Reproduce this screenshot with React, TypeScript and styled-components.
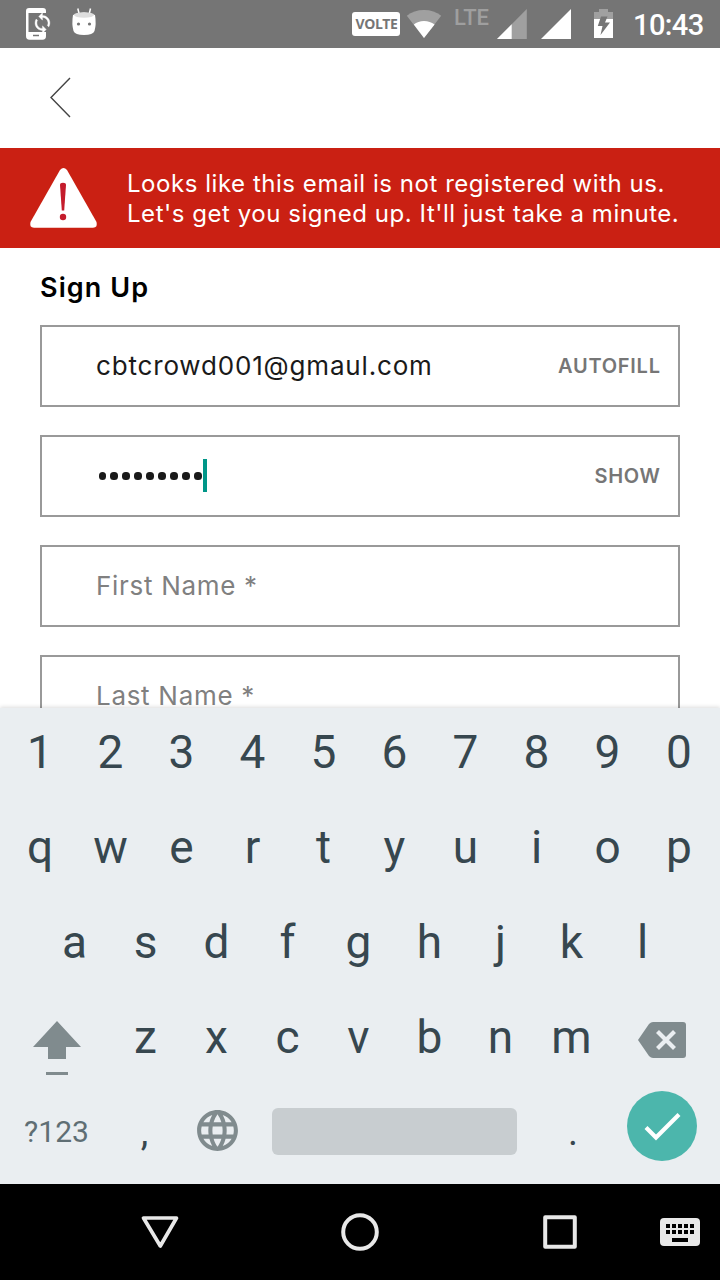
import React from "react";
import styled, { createGlobalStyle } from "styled-components";
import { MdLanguage } from "react-icons/md";

const Global = createGlobalStyle`
  * { box-sizing: border-box; }
  body { margin: 0; background: #fff; }
`;

const Screen = styled.div`
  width: 720px;
  height: 1280px;
  display: flex;
  flex-direction: column;
  overflow: hidden;
  background: #fff;
  font-family: Inter, "Open Sans", sans-serif;
`;

const StatusBar = styled.header`
  height: 48px;
  flex: none;
  display: flex;
  background: #757575;
  color: #fff;
  font-family: Roboto, sans-serif;
`;

const Notifications = styled.div`
  display: flex;
  flex: 1;
`;

const VolteBadge = styled.span`
  width: 48px;
  height: 24px;
  margin-top: 12px;
  border-radius: 3px;
  background: #fff;
  color: #757575;
  font: 700 14px/24px "Open Sans", sans-serif;
  letter-spacing: -0.45px;
  padding-left: 1px;
  text-align: center;
`;

const Lte = styled.span`
  width: 54px;
  padding-left: 11px;
  font: 500 22px/36px Roboto, sans-serif;
  letter-spacing: 0;
  color: #9f9f9f;
`;

const Clock = styled.time`
  width: 87px;
  margin-left: 3px;
  font: 500 29px/51px Roboto, sans-serif;
  letter-spacing: -0.6px;
`;

const TopBar = styled.nav`
  height: 100px;
  flex: none;
`;

const Banner = styled.section`
  height: 100px;
  flex: none;
  display: flex;
  background: #ca2013;
  color: #fff;
`;

const BannerText = styled.p`
  margin: 21px 0 0 26px;
  font-size: 24px;
  line-height: 30px;
  letter-spacing: 0.54px;
  white-space: nowrap;
`;

const Line = styled.span`
  display: block;
`;

const Form = styled.main`
  height: 460px;
  flex: none;
  padding: 0 40px;
  overflow: hidden;
`;

const Title = styled.h1`
  margin: 0;
  height: 77px;
  font-size: 27px;
  font-weight: 600;
  line-height: 79px;
  letter-spacing: 1.1px;
  color: #000;
`;

const Field = styled.div`
  height: 82px;
  margin-bottom: 28px;
  padding: 0 18px 0 54px;
  border: 2px solid #999;
  display: flex;
  align-items: center;
  justify-content: space-between;
`;

const Value = styled.span<{ $hint?: boolean }>`
  font-size: 26px;
  line-height: 32px;
  letter-spacing: ${(p) => (p.$hint ? 0.7 : 0.83)}px;
  color: ${(p) => (p.$hint ? "#808080" : "#1a1a1a")};
`;

const Action = styled.span`
  font-size: 20px;
  font-weight: 600;
  letter-spacing: 0.75px;
  margin-right: -0.75px;
  color: #767676;
`;

const Password = styled.div`
  display: flex;
  align-items: center;
  padding-left: 2.5px;
`;

const Dot = styled.i`
  width: 7.2px;
  height: 7.2px;
  margin-right: 4.8px;
  border-radius: 50%;
  background: #1a1a1a;
  &:last-of-type { margin-right: 1.3px; }
`;

const Caret = styled.b`
  width: 4px;
  height: 33px;
  margin-top: -1px;
  background: #009688;
`;

const Keyboard = styled.section`
  position: relative;
  height: 476px;
  flex: none;
  background: #eaeef1;
  box-shadow: 0 -1px 4px rgba(0, 0, 0, 0.14);
  font-family: Roboto, sans-serif;
  color: #37474f;
`;

const Key = styled.span<{ $w?: number; $size?: number; $line?: number; $muted?: boolean }>`
  width: ${(p) => p.$w ?? 71}px;
  flex: none;
  display: flex;
  justify-content: center;
  font-size: ${(p) => p.$size ?? 46}px;
  line-height: ${(p) => p.$line ?? 89}px;
  color: ${(p) => (p.$muted ? "#5f6e74" : "#37474f")};
`;

const KeyRow = styled.div<{ $inset?: number; $full?: boolean }>`
  height: 95px;
  display: flex;
  padding: 0 ${(p) => p.$inset ?? 5}px;
  ${(p) => p.$full && `
    & > :first-child { width: 70px; }
    & > :last-child { width: 72px; }
  `}
`;

const GlobeKey = styled(Key)`
  color: #808b8e;
  padding: 18px 0 0 1px;
`;

const SpaceBar = styled.div`
  width: 245px;
  height: 47px;
  margin: 20px 0 0 20px;
  border-radius: 6px;
  background: #c8cdd0;
`;

const Enter = styled.div`
  width: 70px;
  height: 70px;
  margin: 3px 0 0 -2px;
  border-radius: 50%;
  background: #4cb6ac;
`;

const NavBar = styled.footer`
  height: 96px;
  flex: none;
  background: #000;
`;

const Svg = styled.svg`
  display: block;
  flex: none;
`;

const SyncPhone = () => (
  <Svg width="60" height="48">
    <path
      fill="#fff"
      fillRule="evenodd"
      d="M29 8H43Q46 8 46 11V13H28.500V32H46V36Q46 39.800 42.500 39.800H29.500Q26 39.800 26 36V11Q26 8 29 8ZM33 34.800V36.200H39V34.800Z"
    />
    <circle cx="42.500" cy="23" r="8.200" fill="#757575" />
    <path
      transform="translate(31.300 11.800) scale(.93)"
      fill="#fff"
      stroke="#fff"
      strokeWidth=".4"
      d="M12 4V1L8 5l4 4V6c3.310 0 6 2.690 6 6 0 1.010-.25 1.970-.7 2.800l1.460 1.460C19.540 15.030 20 13.570 20 12c0-4.420-3.580-8-8-8zm0 14c-3.310 0-6-2.690-6-6 0-1.010.25-1.970.7-2.800L5.240 7.740C4.460 8.970 4 10.430 4 12c0 4.420 3.580 8 8 8v3l4-4-4-4v3z"
    />
  </Svg>
);

const RobotHead = () => (
  <Svg width="50" height="48">
    <path d="M17.800 8.500L19.200 14M30.500 8.500L29.200 14" stroke="#fff" strokeWidth="1.500" fill="none" />
    <path d="M13 15Q24 10 35 15Q36.500 24 34.500 31Q33 35 24 35Q15 35 13.500 31Q11.500 24 13 15Z" fill="#fff" />
    <ellipse cx="24" cy="15" rx="10" ry="2.700" fill="#dedede" />
    <circle cx="18.500" cy="24" r="1.600" fill="#757575" />
    <circle cx="29.500" cy="24" r="1.600" fill="#757575" />
  </Svg>
);

const Wifi = () => (
  <Svg width="43" height="48">
    <path d="M24 38L6.800 15.800Q14 10 24 10T41.200 15.800Z" fill="#a0a0a0" />
    <path d="M24 38L13.800 24.500Q18 21 24 21T34.600 24.500Z" fill="#fff" />
  </Svg>
);

const Signals = () => (
  <Svg width="97" height="48">
    <path d="M29.800 9V39H0Z" fill="#a0a0a0" />
    <path d="M14.700 24.300V39H0Z" fill="#fff" />
    <path d="M74 9V39H44Z" fill="#fff" />
  </Svg>
);

const ChargingBattery = () => (
  <Svg width="36" height="48">
    <path d="M0 12H5V9H14V12H19V19H0Z" fill="#a0a0a0" />
    <path d="M0 19H19V38H0Z" fill="#fff" />
    <path d="M7 16.500H13.500L11 22.500H16L6.500 35L8.500 26H3.800Z" fill="#757575" />
  </Svg>
);

const Chevron = () => (
  <Svg width="120" height="100">
    <path d="M70 30L51 49.500L70 69" fill="none" stroke="#444" strokeWidth="1.400" />
  </Svg>
);

const Warning = () => (
  <Svg width="101" height="100">
    <path d="M60 22Q63.500 18 67 22L96.500 74Q98 79.700 93 79.700H34Q29 79.700 30.500 74Z" fill="#fff" />
    <path d="M60 37Q60 34.800 63 34.800T66 37L64.200 62.500H61.800Z" fill="#c41c2c" />
    <circle cx="63" cy="69" r="3.200" fill="#c41c2c" />
  </Svg>
);

const ShiftIcon = () => (
  <Svg width="105" height="95">
    <path d="M52 28L76 54H61V66H43V54H28Z" fill="#808b8e" />
    <path d="M41 79H63V82H41Z" fill="#808b8e" />
  </Svg>
);

const BackspaceIcon = () => (
  <Svg width="108" height="95">
    <path d="M31 47L42 31Q44 29 46 29H76Q79 29 79 32V62Q79 65 76 65H46Q44 65 42 63Z" fill="#808b8e" />
    <path d="M50.500 38.500L67.500 55.500M67.500 38.500L50.500 55.500" stroke="#eaeef1" strokeWidth="4.200" />
  </Svg>
);

const CheckIcon = () => (
  <Svg width="70" height="70">
    <path d="M19 36.500L29 46.500L52 23.500" fill="none" stroke="#fff" strokeWidth="4.200" />
  </Svg>
);

const NavIcons = () => (
  <Svg width="720" height="96">
    <g fill="none" stroke="#e8e8e8" strokeWidth="4" strokeLinejoin="round">
      <path d="M143.500 34H176.500L160.300 62Z" strokeWidth="3.700" />
      <circle cx="360" cy="48" r="16.800" />
      <rect x="545.200" y="33.200" width="29.600" height="29.600" />
    </g>
    <rect x="660" y="34" width="40" height="28" rx="4" fill="#e8e8e8" />
    {[666, 672, 678, 684, 690].map((x) => (
      <path key={x} d={`M${x} 40h4v4h-4zM${x} 46h4v4h-4z`} fill="#000" />
    ))}
    <path d="M672 54h16v4h-16z" fill="#000" />
  </Svg>
);

const keysOf = (letters: string) => letters.split("").map((k) => <Key key={k}>{k}</Key>);

export default function App() {
  return (
    <Screen>
      <Global />
      <StatusBar>
        <Notifications>
          <SyncPhone />
          <RobotHead />
        </Notifications>
        <VolteBadge>VOLTE</VolteBadge>
        <Wifi />
        <Lte>LTE</Lte>
        <Signals />
        <ChargingBattery />
        <Clock>10:43</Clock>
      </StatusBar>
      <TopBar>
        <Chevron />
      </TopBar>
      <Banner>
        <Warning />
        <BannerText>
          <Line>Looks like this email is not registered with us.</Line>
          <Line>Let's get you signed up. It'll just take a minute.</Line>
        </BannerText>
      </Banner>
      <Form>
        <Title>Sign Up</Title>
        <Field>
          <Value>cbtcrowd001@gmaul.com</Value>
          <Action>AUTOFILL</Action>
        </Field>
        <Field>
          <Password>
            {Array.from({ length: 9 }, (_, i) => (
              <Dot key={i} />
            ))}
            <Caret />
          </Password>
          <Action>SHOW</Action>
        </Field>
        <Field>
          <Value $hint>First Name *</Value>
        </Field>
        <Field>
          <Value $hint>Last Name *</Value>
        </Field>
      </Form>
      <Keyboard>
        <KeyRow $full>{keysOf("1234567890")}</KeyRow>
        <KeyRow $full>{keysOf("qwertyuiop")}</KeyRow>
        <KeyRow $inset={39}>{keysOf("asdfghjkl")}</KeyRow>
        <KeyRow>
          <ShiftIcon />
          {keysOf("zxcvbnm")}
          <BackspaceIcon />
        </KeyRow>
        <KeyRow>
          <Key $w={103} $size={30} $line={87} $muted>?123</Key>
          <Key $w={73} $size={38} $line={88}>,</Key>
          <GlobeKey>
            <MdLanguage size={49} />
          </GlobeKey>
          <SpaceBar />
          <Key $w={112} $size={38} $line={88}>.</Key>
          <Enter>
            <CheckIcon />
          </Enter>
        </KeyRow>
      </Keyboard>
      <NavBar>
        <NavIcons />
      </NavBar>
    </Screen>
  );
}
